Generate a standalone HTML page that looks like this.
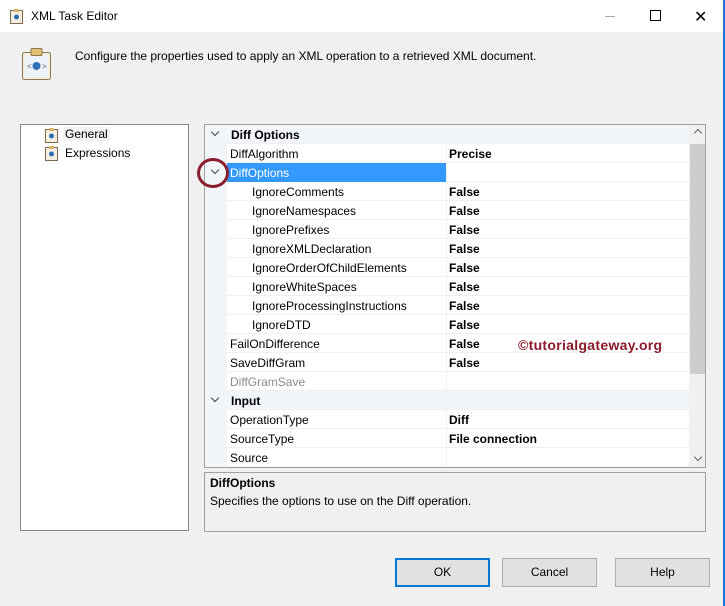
<!DOCTYPE html><html><head><style>
*{margin:0;padding:0;box-sizing:border-box}
body{width:725px;height:606px;background:#f0f0f0;font:12px "Liberation Sans",sans-serif;color:#000;position:relative;overflow:hidden;border-right:2px solid #1979ca}
.a{position:absolute}
.row{position:absolute;left:22px;width:462px;height:19px;border-bottom:1px solid #f0f0f0;background:#fff}
.row span{position:absolute;top:3px;white-space:nowrap}
.row b{position:absolute;left:222px;top:3px;white-space:nowrap}
.row .v{position:absolute;left:219px;top:0;width:1px;height:19px;background:#f0f0f0}
.cat{background:#f2f5fa}
.btn{position:absolute;top:558px;width:95px;height:29px;background:#e1e1e1;border:1px solid #adadad;text-align:center;line-height:27px;font-size:12px}
.chev{position:absolute;width:6px;height:6px;border-right:1.5px solid #444;border-bottom:1.5px solid #444;transform:rotate(45deg)}
</style></head><body>
<div class="a" style="left:0;top:0;width:723px;height:32px;background:#fff"></div>
<svg class="a" style="left:9px;top:8px" width="16" height="16"><rect x="1.5" y="2.5" width="12" height="13" fill="#f4efe2" stroke="#7a6a4a"/><rect x="5" y="1" width="5" height="3" fill="#d6b466"/><circle cx="7.5" cy="9" r="2.5" fill="#2d6fb5"/></svg>
<div class="a" style="left:31px;top:9px;font-size:12px">XML Task Editor</div>
<div class="a" style="left:605px;top:16px;width:10px;height:1px;background:#aaa"></div>
<div class="a" style="left:650px;top:10px;width:11px;height:11px;border:1px solid #000"></div>
<div class="a" style="left:694px;top:7px;font-size:16px">✕</div>
<svg class="a" style="left:21px;top:47px" width="32" height="34"><rect x="1.5" y="5.5" width="28" height="27" rx="2" fill="#f4efe2" stroke="#8a7650"/><rect x="4" y="9" width="23" height="21" fill="#eef3fa"/><rect x="10" y="1.5" width="11" height="7" rx="1" fill="#e2c070" stroke="#8a7650"/><circle cx="15.5" cy="19" r="4" fill="#2d6fb5"/><text x="6" y="22" font-size="8" fill="#555">&lt;</text><text x="21" y="22" font-size="8" fill="#555">&gt;</text></svg>
<div class="a" style="left:75px;top:49px">Configure the properties used to apply an XML operation to a retrieved XML document.</div>
<div class="a" style="left:20px;top:124px;width:169px;height:407px;background:#fff;border:1px solid #828790"></div>
<svg class="a" style="left:44px;top:127px" width="16" height="16"><rect x="1.5" y="2.5" width="12" height="13" fill="#f4efe2" stroke="#7a6a4a"/><rect x="5" y="1" width="5" height="3" fill="#d6b466"/><circle cx="7.5" cy="9" r="2.5" fill="#2d6fb5"/></svg>
<div class="a" style="left:63px;top:127px;background:#f2f2f2;padding:0 2px">General</div>
<svg class="a" style="left:44px;top:145px" width="16" height="16"><rect x="1.5" y="2.5" width="12" height="13" fill="#f4efe2" stroke="#7a6a4a"/><rect x="5" y="1" width="5" height="3" fill="#d6b466"/><circle cx="7.5" cy="9" r="2.5" fill="#2d6fb5"/></svg>
<div class="a" style="left:65px;top:146px">Expressions</div>
<div class="a" style="left:204px;top:124px;width:502px;height:344px;background:#f2f5fa;border:1px solid #a0a0a0;overflow:hidden">
<div class="row cat" style="top:0"><span style="left:4px;font-weight:bold">Diff Options</span></div>
<div class="row" style="top:19px"><span style="left:3px">DiffAlgorithm</span><i class="v"></i><b>Precise</b></div>
<div class="row" style="top:38px;background:#fff"><span style="left:0;top:0;width:219px;height:19px;background:#3399ff;color:#fff;padding:3px 3px">DiffOptions</span><i class="v"></i></div>
<div class="row" style="top:57px"><span style="left:25px">IgnoreComments</span><i class="v"></i><b>False</b></div>
<div class="row" style="top:76px"><span style="left:25px">IgnoreNamespaces</span><i class="v"></i><b>False</b></div>
<div class="row" style="top:95px"><span style="left:25px">IgnorePrefixes</span><i class="v"></i><b>False</b></div>
<div class="row" style="top:114px"><span style="left:25px">IgnoreXMLDeclaration</span><i class="v"></i><b>False</b></div>
<div class="row" style="top:133px"><span style="left:25px">IgnoreOrderOfChildElements</span><i class="v"></i><b>False</b></div>
<div class="row" style="top:152px"><span style="left:25px">IgnoreWhiteSpaces</span><i class="v"></i><b>False</b></div>
<div class="row" style="top:171px"><span style="left:25px">IgnoreProcessingInstructions</span><i class="v"></i><b>False</b></div>
<div class="row" style="top:190px"><span style="left:25px">IgnoreDTD</span><i class="v"></i><b>False</b></div>
<div class="row" style="top:209px"><span style="left:3px">FailOnDifference</span><i class="v"></i><b>False</b></div>
<div class="row" style="top:228px"><span style="left:3px">SaveDiffGram</span><i class="v"></i><b>False</b></div>
<div class="row" style="top:247px"><span style="left:3px;color:#8a8a8a">DiffGramSave</span><i class="v"></i></div>
<div class="row cat" style="top:266px"><span style="left:4px;font-weight:bold">Input</span></div>
<div class="row" style="top:285px"><span style="left:3px">OperationType</span><i class="v"></i><b>Diff</b></div>
<div class="row" style="top:304px"><span style="left:3px">SourceType</span><i class="v"></i><b>File connection</b></div>
<div class="row" style="top:323px"><span style="left:3px">Source</span><i class="v"></i></div>
<div class="chev" style="left:7px;top:4px"></div>
<div class="chev" style="left:7px;top:42px"></div>
<div class="chev" style="left:7px;top:270px"></div>
<div class="a" style="left:484px;top:0;width:17px;height:342px;background:#f0f0f0"></div>
<div class="a" style="left:485px;top:19px;width:15px;height:230px;background:#cdcdcd"></div>
<div class="chev" style="left:490px;top:5px;transform:rotate(225deg);border-color:#666"></div>
<div class="chev" style="left:490px;top:329px;border-color:#666"></div>
</div>
<div class="a" style="left:197px;top:158px;width:32px;height:30px;border:3px solid #8a1e2e;border-radius:50%"></div>
<div class="a" style="left:518px;top:337px;color:#8b1a2a;font-weight:bold;font-size:14px;letter-spacing:0.3px">©tutorialgateway.org</div>
<div class="a" style="left:204px;top:472px;width:502px;height:60px;border:1px solid #a0a0a0;background:#f0f0f0"></div>
<div class="a" style="left:210px;top:476px;font-weight:bold">DiffOptions</div>
<div class="a" style="left:210px;top:494px">Specifies the options to use on the Diff operation.</div>
<div class="btn" style="left:395px;border:2px solid #0078d7;line-height:25px">OK</div>
<div class="btn" style="left:502px">Cancel</div>
<div class="btn" style="left:615px">Help</div>
</body></html>
